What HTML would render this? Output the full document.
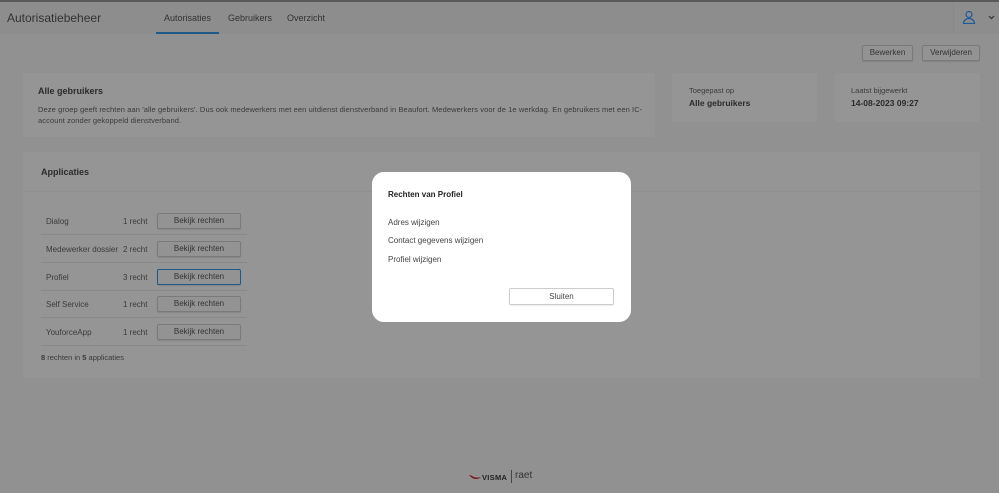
<!DOCTYPE html>
<html><head><meta charset="utf-8"><style>
*{box-sizing:border-box;margin:0;padding:0}
body{width:999px;height:493px;background:#919191;font-family:"Liberation Sans",sans-serif;color:#2b2b2b;position:relative;overflow:hidden;font-size:8px}
.top{position:absolute;left:0;top:0;width:999px;height:2px;background:#5a5a5a}
.hdr{position:absolute;left:0;top:2px;width:999px;height:32px;background:#8d8d8d}
.abs{position:absolute;white-space:nowrap}
.card{position:absolute;background:#959595;border-radius:3px}
.btn{position:absolute;border:1px solid #7a7a7a;background:#939393;border-radius:2px;text-align:center;font-size:8px;color:#333;box-shadow:0 1px 1px rgba(0,0,0,.1)}
.row{position:absolute;left:41px;width:206px;height:28px;border-bottom:1px solid #898989}
.row span{position:absolute;top:10px;font-size:8px;color:#3a3a3a}
</style></head><body>
<div class="top"></div>
<div class="hdr"></div>
<div class="abs" style="left:7px;top:11px;font-size:12px;color:#333">Autorisatiebeheer</div>
<div class="abs" style="left:164px;top:13px;font-size:9px;color:#333">Autorisaties</div>
<div class="abs" style="left:228px;top:13px;font-size:9px;color:#333">Gebruikers</div>
<div class="abs" style="left:287px;top:13px;font-size:9px;color:#333">Overzicht</div>
<div class="abs" style="left:156px;top:32px;width:63px;height:2px;background:#1d5a8a"></div>
<div class="abs" style="left:953px;top:2px;width:1px;height:32px;background:#888"></div>
<svg class="abs" style="left:962px;top:10px" width="14" height="14" viewBox="0 0 14 14"><circle cx="7" cy="4.5" r="3" fill="none" stroke="#1d5a99" stroke-width="1.2"/><path d="M1.5 13.5c0-3 2.5-5 5.5-5s5.5 2 5.5 5z" fill="none" stroke="#1d5a99" stroke-width="1.2"/></svg>
<svg class="abs" style="left:988px;top:15px" width="7" height="5" viewBox="0 0 7 5"><path d="M1 1l2.5 2.5L6 1" fill="none" stroke="#333" stroke-width="1.2"/></svg>
<div class="btn" style="left:862px;top:45px;width:51px;height:16px;line-height:14px">Bewerken</div>
<div class="btn" style="left:922px;top:45px;width:58px;height:16px;line-height:14px">Verwijderen</div>
<div class="card" style="left:23px;top:73px;width:632px;height:64px"></div>
<div class="abs" style="left:38px;top:86px;font-size:9px;font-weight:bold">Alle gebruikers</div>
<div class="abs" style="left:38px;top:104px;font-size:7.5px;color:#3a3a3a;line-height:11px;white-space:normal;width:608px;letter-spacing:.1px">Deze groep geeft rechten aan 'alle gebruikers'. Dus ook medewerkers met een uitdienst dienstverband in Beaufort. Medewerkers voor de 1e werkdag. En gebruikers met een IC-account zonder gekoppeld dienstverband.</div>
<div class="card" style="left:672px;top:73px;width:145px;height:49px"></div>
<div class="abs" style="left:689px;top:86px;font-size:7.5px;color:#3a3a3a">Toegepast op</div>
<div class="abs" style="left:689px;top:98px;font-size:8.5px;font-weight:bold">Alle gebruikers</div>
<div class="card" style="left:835px;top:73px;width:145px;height:49px"></div>
<div class="abs" style="left:851px;top:86px;font-size:7.5px;color:#3a3a3a">Laatst bijgewerkt</div>
<div class="abs" style="left:851px;top:98px;font-size:8.5px;font-weight:bold">14-08-2023 09:27</div>
<div class="card" style="left:23px;top:152px;width:957px;height:226px"></div>
<div class="abs" style="left:23px;top:191px;width:957px;height:1px;background:#8f8f8f"></div>
<div class="abs" style="left:41px;top:167px;font-size:9px;font-weight:bold">Applicaties</div>
<div class="row" style="top:207px"><span style="left:5px">Dialog</span><span style="left:82px">1 recht</span></div>
<div class="row" style="top:235px"><span style="left:5px">Medewerker dossier</span><span style="left:82px">2 recht</span></div>
<div class="row" style="top:263px"><span style="left:5px">Profiel</span><span style="left:82px">3 recht</span></div>
<div class="row" style="top:290px"><span style="left:5px">Self Service</span><span style="left:82px">1 recht</span></div>
<div class="row" style="top:318px"><span style="left:5px">YouforceApp</span><span style="left:82px">1 recht</span></div>
<div class="btn" style="left:157px;top:213px;width:84px;height:16px;line-height:14px">Bekijk rechten</div>
<div class="btn" style="left:157px;top:241px;width:84px;height:16px;line-height:14px">Bekijk rechten</div>
<div class="btn" style="left:157px;top:269px;width:84px;height:16px;line-height:14px;border-color:#1d5a8a">Bekijk rechten</div>
<div class="btn" style="left:157px;top:296px;width:84px;height:16px;line-height:14px">Bekijk rechten</div>
<div class="btn" style="left:157px;top:324px;width:84px;height:16px;line-height:14px">Bekijk rechten</div>
<div class="abs" style="left:41px;top:353px;font-size:7.5px;color:#3a3a3a"><b>8</b> rechten in <b>5</b> applicaties</div>
<div class="abs" style="left:372px;top:172px;width:259px;height:150px;background:#fff;border-radius:12px"></div>
<div class="abs" style="left:388px;top:190px;font-size:8px;font-weight:bold;color:#222">Rechten van Profiel</div>
<div class="abs" style="left:388px;top:218px;font-size:8px;color:#444">Adres wijzigen</div>
<div class="abs" style="left:388px;top:236px;font-size:8px;color:#444">Contact gegevens wijzigen</div>
<div class="abs" style="left:388px;top:255px;font-size:8px;color:#444">Profiel wijzigen</div>
<div class="abs" style="left:509px;top:288px;width:105px;height:17px;border:1px solid #ccc;border-radius:2px;text-align:center;line-height:15px;font-size:8px;color:#444;box-shadow:0 1px 1px rgba(0,0,0,.08)">Sluiten</div>
<svg class="abs" style="left:468px;top:473px" width="14" height="8" viewBox="0 0 14 8"><path d="M1 2c3 0 5 4 12 2-3 3-8 3-12-2z" fill="#7a1a1a"/></svg>
<div class="abs" style="left:482px;top:473px;font-size:7.5px;font-weight:bold;color:#222;letter-spacing:.3px">VISMA</div>
<div class="abs" style="left:511px;top:470px;width:1px;height:13px;background:#444"></div>
<div class="abs" style="left:515px;top:470px;font-size:10px;color:#333">raet</div>
</body></html>
